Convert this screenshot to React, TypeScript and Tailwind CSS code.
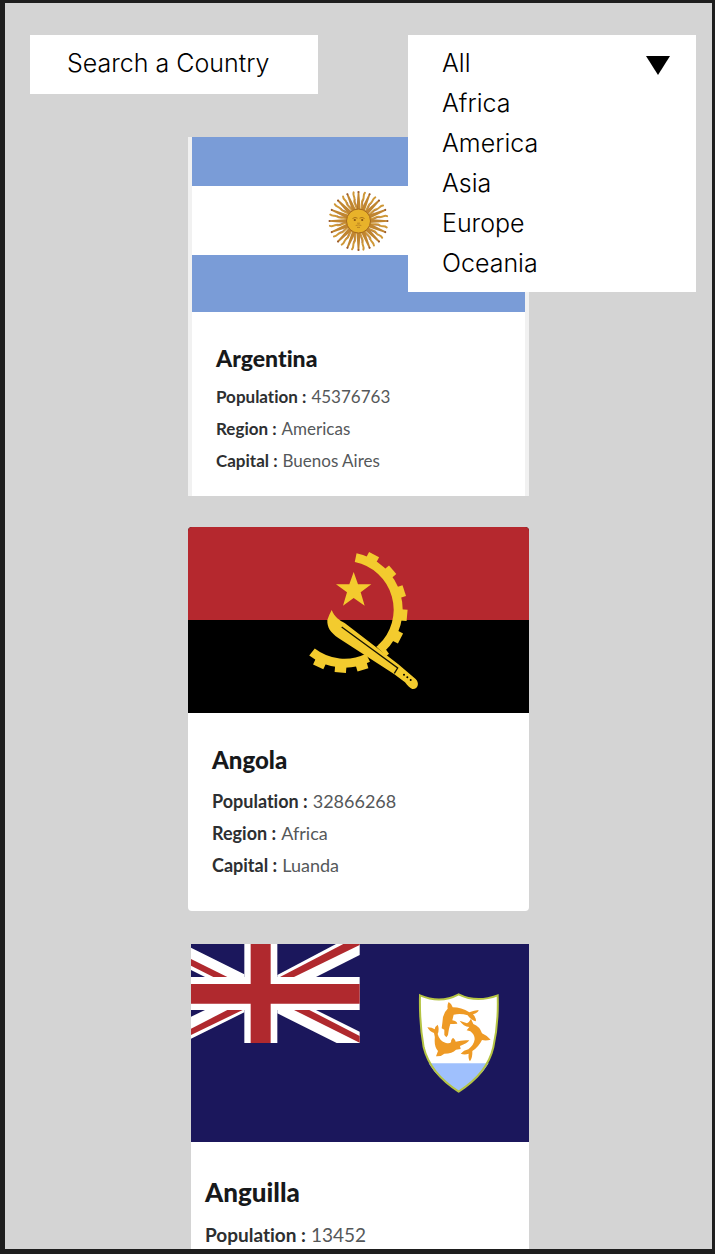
import type { ReactNode } from "react";

const regions = ["All", "Africa", "America", "Asia", "Europe", "Oceania"];

function ArgentinaFlag() {
  return (
    <svg viewBox="0 0 333 175" className="block w-full" role="img" aria-label="Flag of Argentina">
      <rect width="333" height="175" fill="#fff" />
      <rect width="333" height="49" fill="#7a9cd7" />
      <rect y="118" width="333" height="57" fill="#7a9cd7" />
      <g transform="translate(166.5 84)">
        {Array.from({ length: 16 }, (_, i) => (
          <g key={i} transform={`rotate(${i * 22.5})`}>
            <path d="M-2-11L-.8-29.5H.8L2-11Z" fill="#c08530" />
            <circle cy="-29" r="1" fill="#9a5a30" />
            <g transform="rotate(11.25)">
              <path
                d="M0-11C2.200-15-2-18 .2-22C1.400-24.500-1-26 .8-29"
                fill="none"
                stroke="#cf9838"
                strokeWidth="2"
                strokeLinecap="round"
              />
              <path d="M1-11C3-15-1-18 1.200-22" fill="none" stroke="#9a5a30" strokeWidth=".5" />
            </g>
          </g>
        ))}
        <circle r="12" fill="#e8b22a" stroke="#a5691f" strokeWidth="1" />
        <path d="M-6-2.500q2.500-2 5-.3M1-2.800q2.500-1.700 5 .3" fill="none" stroke="#9a6318" strokeWidth=".8" />
        <circle cx="-3.700" cy="-1" r="1.100" fill="#855010" />
        <circle cx="3.700" cy="-1" r="1.100" fill="#855010" />
        <path d="M-1.400 2.200H1.400M-2.800 4.500Q0 3.400 2.800 4.500M-1.500 6.400H1.500" fill="none" stroke="#a9711d" strokeWidth=".7" />
      </g>
    </svg>
  );
}

function AngolaFlag() {
  return (
    <svg viewBox="0 0 341 186" className="block w-full" role="img" aria-label="Flag of Angola">
      <rect width="341" height="186" fill="#000" />
      <rect width="341" height="93" fill="#b5282e" />
      <g transform="translate(102 13) scale(.33333)" fill="#f3cb2e">
        <path d="M191 96L204 133H244L212 157L224 197L191 174L159 197L171 157L138 133H178Z" />
        <path d="M197 53A159 159 0 0 1 274 325M234 353A159 159 0 0 1 66 336" fill="none" stroke="#f3cb2e" strokeWidth="27" />
        {[28, 50, 72, 95, 117, 163, 184, 205].map((angle) => (
          <rect key={angle} x="-17" y="-188" width="34" height="32" transform={`translate(164 210) rotate(${angle})`} />
        ))}
        <path d="M259 320L272 310L286 326L297 341L289 348Z" />
        <path d="M125 210C134 232 148 240 165 250L325 373L376 416C390 428 384 449 367 447C360 444 352 437 345 427L312 402L145 294C121 277 111 262 112 240Q116 227 125 210Z" />
        <path d="M155 261L323 384L313 400" fill="none" stroke="#171403" strokeWidth="4" />
        <circle cx="342" cy="404" r="3" fill="#000" />
        <circle cx="352" cy="412" r="3" fill="#000" />
        <circle cx="362" cy="420" r="3" fill="#000" />
      </g>
    </svg>
  );
}

function AnguillaFlag() {
  return (
    <svg viewBox="0 0 338 198" className="block w-full" role="img" aria-label="Flag of Anguilla">
      <rect width="338" height="198" fill="#1b175c" />
      <g transform="translate(-11 -9) scale(.33333)">
        <g fill="#fff">
          <path d="M33 38L193 118V140H100L75 126L33 105Z" />
          <path d="M292 120L468 27H539V60L408 126L380 140H292Z" />
          <path d="M33 245L75 225L100 210H193V232L33 311Z" />
          <path d="M292 235L470 324H539V290L408 225L380 210H292Z" />
          <path d="M193 27H292V126H539V225H292V324H193V225H33V126H193Z" />
        </g>
        <g fill="#b0292e">
          <path d="M33 72L142 126H100L33 92Z" />
          <path d="M300 126L490 27H539V30L342 126Z" />
          <path d="M142 225H188L33 300V281Z" />
          <path d="M342 225H388L539 303V323Z" />
          <path d="M212 27H272V147H539V206H272V324H212V206H33V147H212Z" />
        </g>
      </g>
      <g transform="translate(209 36) scale(.33333)">
        <path
          d="M60 46Q122 72 176 43Q230 70 293 46Q296 130 280 202Q262 280 176 335Q90 280 71 202Q58 130 60 46Z"
          fill="#fff"
        />
        <path d="M86 250H266Q238 298 176 335Q114 298 86 250Z" fill="#9fc0fd" />
        <path
          d="M60 46Q122 72 176 43Q230 70 293 46Q296 130 280 202Q262 280 176 335Q90 280 71 202Q58 130 60 46Z"
          fill="none"
          stroke="#b5c443"
          strokeWidth="6"
        />
        <g fill="#ee9a25">
          <path d="M146 66Q154 70 158 82Q184 82 208 97Q223 91 236 90Q234 99 219 103Q228 112 228 124Q214 121 203 106Q182 99 161 104L157 121Q171 124 172 131Q160 132 151 132Q147 143 144 165L139 172L133 165V149L125 145Q127 130 129 111Q132 96 143 86Q141 74 146 66Z" />
          <path d="M179 122L201 130Q208 126 213 116L220 132Q239 139 246 160Q263 168 272 179Q258 183 246 180Q235 202 217 213Q218 232 210 244Q204 237 206 221Q194 226 182 221Q191 211 205 208Q222 195 224 178Q224 163 211 154L200 151L208 141Q190 139 179 122Z" />
          <path d="M113 134Q119 147 113 162Q118 183 138 189Q148 192 153 187Q152 179 159 173Q166 179 167 185Q187 179 208 181Q202 190 180 198L182 207L168 209Q157 221 133 221Q124 230 108 229L114 213Q104 202 104 183Q106 171 102 159Q88 154 82 142Q97 142 104 148Q105 139 113 134Z" />
        </g>
      </g>
    </svg>
  );
}

type CardProps = {
  name: string;
  facts: [string, string][];
  flag: ReactNode;
  frame: string;
  body: string;
  title: string;
  list: string;
};

function CountryCard({ name, facts, flag, frame, body, title, list }: CardProps) {
  return (
    <article className={`bg-white ${frame}`}>
      {flag}
      <div className={body}>
        <h2 className={`leading-8 font-black text-[#17191b] ${title}`}>{name}</h2>
        <dl className={`flex flex-col gap-1 leading-7 text-[#2d2f31] ${list}`}>
          {facts.map(([label, value]) => (
            <div key={label} className="flex gap-[5px]">
              <dt className="font-bold">{label} :</dt>
              <dd className="text-[#55585a]">{value}</dd>
            </div>
          ))}
        </dl>
      </div>
    </article>
  );
}

export default function App() {
  return (
    <div className="min-h-screen bg-[#1e1e1e] pt-[3px] pr-[3px] pb-[5px] pl-[5px]">
      <main className="bg-[#d4d4d4] pt-8">
        <header className="flex items-start justify-between gap-4 pr-4 pl-[25px] font-['Inter',sans-serif] text-[25px] text-black">
          <input
            type="text"
            aria-label="Search a Country"
            placeholder="Search a Country"
            className="h-[59px] w-72 appearance-none bg-white pr-4 pb-1 pl-[37px] font-[350] outline-none placeholder:text-black"
          />
          <div className="relative h-[59px] w-72">
            <select
              size={6}
              aria-label="Region"
              className="absolute top-0 left-0 z-10 block h-[257px] w-full appearance-none overflow-hidden bg-white pt-[9px] outline-none"
            >
              {regions.map((region) => (
                <option key={region} className="h-10 px-[34px] py-1 leading-8 font-[350]">
                  {region}
                </option>
              ))}
            </select>
            <svg viewBox="0 0 24 19" className="pointer-events-none absolute top-[21px] right-[26px] z-20 w-6" aria-hidden="true">
              <path d="M0 0H24L12 19Z" />
            </svg>
          </div>
        </header>

        <section className="mx-auto mt-[43px] flex w-[341px] max-w-full flex-col font-['Lato',sans-serif] [font-variant-ligatures:none]">
          <CountryCard
            name="Argentina"
            facts={[["Population", "45376763"], ["Region", "Americas"], ["Capital", "Buenos Aires"]]}
            flag={<ArgentinaFlag />}
            frame="border-x-4 border-[#f1f1f1]"
            body="px-6 pt-[30px] pb-[21px]"
            title="text-[23px]"
            list="mt-[9px] text-[17px]"
          />
          <CountryCard
            name="Angola"
            facts={[["Population", "32866268"], ["Region", "Africa"], ["Capital", "Luanda"]]}
            flag={<AngolaFlag />}
            frame="mt-[31px] overflow-hidden rounded"
            body="px-6 pt-[31px] pb-8"
            title="text-[24px]"
            list="mt-[11px] text-[18px]"
          />
          <CountryCard
            name="Anguilla"
            facts={[["Population", "13452"]]}
            flag={<AnguillaFlag />}
            frame="mt-[33px] ml-[3px]"
            body="px-[14px] pt-[34px]"
            title="text-[26px]"
            list="mt-[13px] text-[19px]"
          />
        </section>
      </main>
    </div>
  );
}
